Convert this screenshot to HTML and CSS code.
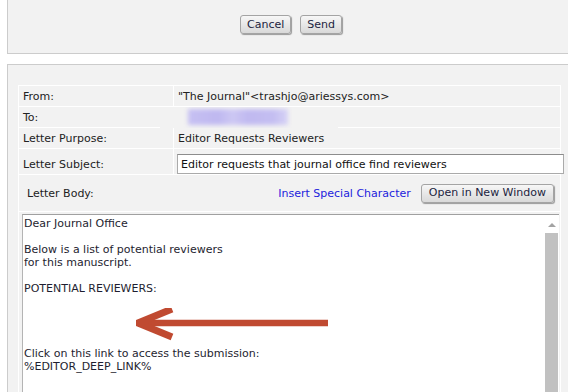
FILE: index.html
```html
<!DOCTYPE html>
<html lang="en">
<head>
  <meta charset="UTF-8" />
  <title>Send Letter</title>
  <link rel="stylesheet" href="styles.css">
</head>
<body>

<!-- Action buttons -->
<div class="actions-panel">
  <button class="btn">Cancel</button>
  <button class="btn">Send</button>
</div>

<!-- Letter -->
<div class="letter-panel">
  <div class="letter-wrap">
    <table class="letter-table">
      <tr>
        <td class="label">From:</td>
        <td class="value">"The Journal"&lt;trashjo@ariessys.com&gt;</td>
      </tr>
      <tr>
        <td class="label">To:</td>
        <td class="value"></td>
      </tr>
      <tr>
        <td class="label">Letter Purpose:</td>
        <td class="value">Editor Requests Reviewers</td>
      </tr>
      <tr class="subject-row">
        <td class="label">Letter Subject:</td>
        <td class="value"><input type="text" class="subject-input" value="Editor requests that journal office find reviewers" /></td>
      </tr>
      <tr>
        <td colspan="2" class="body-head">
          <div class="body-head-inner">
            <span>Letter Body:</span>
            <span class="body-tools">
              <a href="#" class="special-link">Insert Special Character</a>
              <button class="btn">Open in New Window</button>
            </span>
          </div>
        </td>
      </tr>
      <tr>
        <td colspan="2" class="body-cell">
          <div class="letter-body">
            <div class="letter-text">Dear Journal Office

Below is a list of potential reviewers
for this manuscript.

POTENTIAL REVIEWERS:




Click on this link to access the submission:
%EDITOR_DEEP_LINK%</div>
            <div class="scrollbar">
              <span class="scroll-up"></span>
              <span class="scroll-thumb"></span>
            </div>
            <!-- annotation arrow -->
            <svg class="arrow" width="200" height="40" viewBox="0 0 200 40">
              <path d="M2 15 L192 15" stroke="#c04a31" stroke-width="6.5" fill="none"/>
              <path d="M36 1 L2 15 L36 29" stroke="#c04a31" stroke-width="7" fill="none" stroke-linejoin="miter"/>
            </svg>
          </div>
        </td>
      </tr>
    </table>
    <!-- recipient address blurred out -->
    <div class="redacted"><span class="redacted-blob"></span></div>
  </div>
</div>

</body>
</html>
```

FILE: styles.css
```css
* {
  box-sizing: border-box;
}

html {
  overflow: hidden;
}

body {
  margin: 0 0 0 7px;
  width: 568px;
  background: #fff;
  font-family: 'DejaVu Sans', Verdana, sans-serif;
  font-size: 11px;
  color: #222;
}

.actions-panel {
  background: #f2f2f2;
  border: 1px solid #ccc;
  border-top: none;
  height: 54px;
  padding-top: 15px;
  display: flex;
  justify-content: center;
  gap: 9px;
  align-items: flex-start;
}

.btn {
  font-family: 'DejaVu Sans', Verdana, sans-serif;
  font-size: 11px;
  color: #1c2440;
  height: 19px;
  padding: 0 6px;
  border: 1px solid #a4a4a4;
  border-radius: 3px;
  background: linear-gradient(#f7f7f7, #e6e6e6 55%, #d9d9d9);
  box-shadow: 1px 1px 1px #9a9a9a;
  line-height: 16px;
}

.letter-panel {
  margin-top: 10px;
  background: #f2f2f2;
  border: 1px solid #ccc;
  border-bottom: none;
  height: 340px;
  padding: 20px 0 0 10px;
}

.letter-wrap {
  position: relative;
  width: 543px;
}

.letter-table {
  width: 543px;
  border-collapse: separate;
  border-spacing: 1px;
  background: #fff;
  table-layout: fixed;
}

.letter-table td {
  background: #f2f2f2;
  padding: 0;
  height: 20px;
  vertical-align: middle;
}

.letter-table .label {
  width: 154px;
  padding-left: 4px;
}

.letter-table .value {
  padding-left: 4px;
}

.subject-row td {
  height: 25px;
  vertical-align: bottom;
}

.subject-row .label {
  padding-bottom: 3px;
}

.subject-input {
  display: block;
  width: 387px;
  height: 20px;
  margin-left: -1px;
  padding: 0 3px;
  border: 1px solid #aaa;
  border-top-color: #8c8c8c;
  background: #fff;
  font-family: 'DejaVu Sans', Verdana, sans-serif;
  font-size: 11px;
  color: #111;
}

.body-head {
  height: 36px !important;
  padding: 0 6px 0 8px !important;
}

.body-head-inner {
  display: flex;
  justify-content: space-between;
  align-items: center;
}

.body-tools {
  display: flex;
  align-items: center;
  gap: 10px;
}

.body-tools .btn {
  padding: 0 7px;
}

.special-link {
  color: #2222dd;
  text-decoration: none;
}

.body-cell {
  padding: 2px 0 0 3px !important;
  vertical-align: top !important;
}

.letter-body {
  position: relative;
  display: flex;
  width: 537px;
  height: 200px;
  background: #fff;
  border-top: 1px solid #a0a0a0;
  border-left: 1px solid #b4b4b4;
}

.letter-text {
  flex: 1;
  white-space: pre;
  line-height: 13px;
  padding: 2px 0 0 1px;
  color: #1e1e30;
}

.scrollbar {
  width: 17px;
  display: flex;
  flex-direction: column;
  align-items: center;
  padding: 8px 1px 0 3px;
}

.scroll-up {
  width: 0;
  height: 0;
  border-left: 4px solid transparent;
  border-right: 4px solid transparent;
  border-bottom: 4px solid #a3a3a3;
}

.scroll-thumb {
  margin-top: 6px;
  width: 13px;
  flex: 1;
  background: #c1c1c1;
}

.arrow {
  position: absolute;
  left: 113px;
  top: 93px;
}

.redacted {
  position: absolute;
  left: 142px;
  top: 22px;
  width: 178px;
  height: 21px;
  background: #f2f2f2;
  overflow: hidden;
}

.redacted-blob {
  position: absolute;
  left: 28px;
  top: 2px;
  width: 100px;
  height: 16px;
  background: linear-gradient(90deg, #c6c0f2, #bfb8f0 30%, #cdc8f3 45%, #c0b9f0 60%, #c4bef1 85%, #d6d2f5);
  filter: blur(2px);
}
```
